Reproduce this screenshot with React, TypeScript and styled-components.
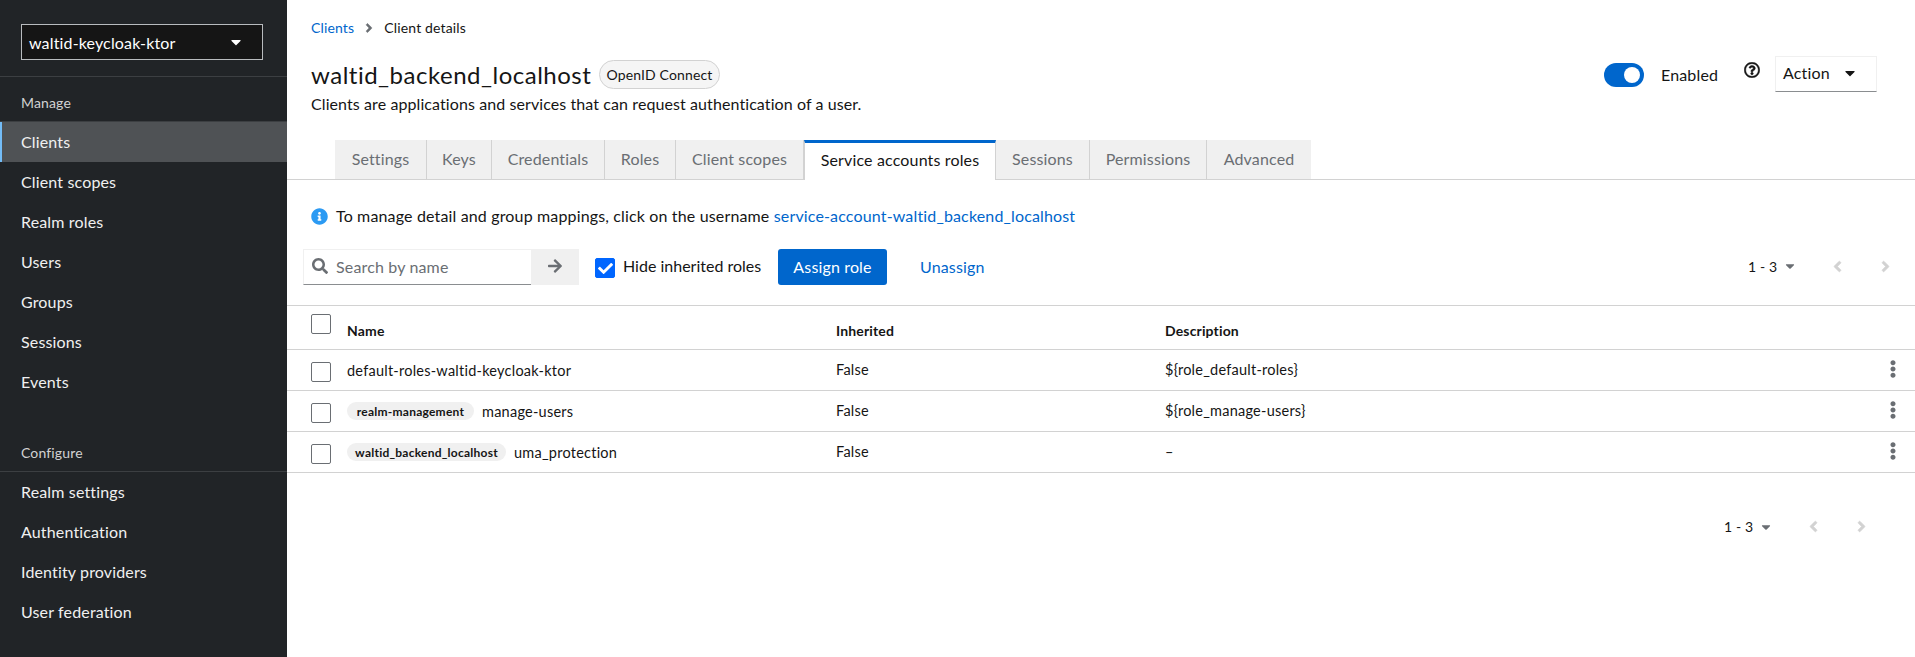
import React from "react";
import styled, { createGlobalStyle } from "styled-components";
import { FaAngleLeft, FaAngleRight, FaArrowRight, FaCaretDown, FaCheck, FaEllipsisV, FaInfoCircle, FaRegQuestionCircle, FaSearch } from "react-icons/fa";

const GlobalStyle = createGlobalStyle`
  html, body {
    margin: 0;
    height: 100%;
    background: #fff;
    color: #151515;
    font-family: "Lato", "Liberation Sans", sans-serif;
    font-size: 16px;
    letter-spacing: 0.15px;
  }
  #root {
    height: 100%;
  }
`;

const Page = styled.div`
  display: flex;
  height: 100vh;
  overflow: hidden;
`;

const Sidebar = styled.aside`
  width: 287px;
  flex-shrink: 0;
  background: #212427;
  color: #fff;
`;

const RealmArea = styled.div`
  padding: 24px 24px 16px 21px;
  border-bottom: 1px solid #3c3f42;
`;

const RealmSelect = styled.div`
  display: flex;
  align-items: center;
  justify-content: space-between;
  height: 36px;
  box-sizing: border-box;
  padding: 0 18px 0 7px;
  background: #151515;
  border: 1px solid #b8bbbe;
  color: #fff;
  svg {
    font-size: 16px;
  }
`;

const SectionTitle = styled.div<{ $top: number }>`
  padding: ${(p) => p.$top}px 21px 8px;
  line-height: 20px;
  font-size: 14px;
  color: #d2d2d2;
  border-bottom: 1px solid #3c3f42;
`;

const NavItem = styled.div<{ $active?: boolean }>`
  height: 40px;
  line-height: 40px;
  padding-left: 21px;
  box-sizing: border-box;
  color: #f0f0f0;
  background: ${(p) => (p.$active ? "#4f5255" : "transparent")};
  box-shadow: ${(p) => (p.$active ? "inset 2px 0 0 #73bcf7" : "none")};
`;

const Main = styled.main`
  flex: 1;
  min-width: 0;
`;

const Breadcrumb = styled.nav`
  display: flex;
  align-items: center;
  padding: 18px 24px 0;
  height: 20px;
  font-size: 14px;
  line-height: 20px;
  svg {
    margin: 0 8px;
    font-size: 14px;
    color: #6a6e73;
    stroke: currentColor;
    stroke-width: 16;
  }
`;

const LinkText = styled.a`
  color: #06c;
`;

const PageHeader = styled.header`
  display: flex;
  justify-content: space-between;
  margin-top: 18px;
  height: 84px;
  padding: 0 38px 0 24px;
`;

const TitleRow = styled.div`
  display: flex;
  align-items: center;
  gap: 8px;
  padding-top: 4px;
  height: 29px;
`;

const Title = styled.h1`
  margin: 0;
  width: 280px;
  font-size: 24px;
  font-weight: 400;
  line-height: 29px;
  letter-spacing: 0.5px;
  white-space: nowrap;
`;

const ProtocolLabel = styled.span`
  display: inline-flex;
  align-items: center;
  justify-content: center;
  box-sizing: border-box;
  width: 121px;
  height: 29px;
  border: 1px solid #d2d2d2;
  border-radius: 30px;
  background: #f5f5f5;
  font-size: 14px;
`;

const Subtitle = styled.p`
  margin: 5px 0 0;
  font-size: 16px;
  line-height: 20px;
  letter-spacing: 0.09px;
`;

const Actions = styled.div`
  display: flex;
  align-items: flex-start;
`;

const Switch = styled.span`
  display: flex;
  align-items: center;
  justify-content: flex-end;
  box-sizing: border-box;
  width: 40px;
  height: 24px;
  margin-top: 7px;
  padding-right: 4px;
  border-radius: 12px;
  background: #06c;
  &::after {
    content: "";
    width: 16px;
    height: 16px;
    border-radius: 50%;
    background: #fff;
  }
`;

const SwitchLabel = styled.span`
  width: 57px;
  margin: 7px 26px 0 17px;
  line-height: 24px;
  white-space: nowrap;
`;

const HelpIcon = styled.span`
  display: flex;
  margin: 6px 15px 0 0;
  font-size: 16px;
  svg {
    stroke: currentColor;
    stroke-width: 14;
  }
`;

const ActionSelect = styled.div`
  display: flex;
  align-items: center;
  justify-content: space-between;
  box-sizing: border-box;
  width: 102px;
  height: 36px;
  padding: 0 18px 3px 7px;
  border: 1px solid #f0f0f0;
  border-bottom-color: #8a8d90;
  svg {
    font-size: 16px;
  }
`;

const TabList = styled.div`
  display: flex;
  height: 40px;
  box-sizing: border-box;
  padding-left: 48px;
  border-bottom: 1px solid #d2d2d2;
`;

const Tab = styled.div<{ $width: number; $active?: boolean }>`
  display: flex;
  align-items: center;
  justify-content: center;
  box-sizing: border-box;
  width: ${(p) => p.$width}px;
  height: ${(p) => (p.$active ? 40 : 39)}px;
  padding-bottom: ${(p) => (p.$active ? 4 : 2)}px;
  white-space: nowrap;
  color: ${(p) => (p.$active ? "#151515" : "#6a6e73")};
  background: ${(p) => (p.$active ? "#fff" : "#f0f0f0")};
  border-right: 1px solid #d2d2d2;
  border-left: ${(p) => (p.$active ? "1px solid #d2d2d2" : "none")};
  border-top: ${(p) => (p.$active ? "3px solid #06c" : "none")};
  &:last-child {
    border-right: none;
  }
`;

const Notice = styled.div`
  display: flex;
  align-items: center;
  gap: 8px;
  margin-top: 24px;
  padding-left: 24px;
  line-height: 24px;
  white-space: pre;
  svg {
    font-size: 17px;
    color: #2b9af3;
  }
`;

const Toolbar = styled.div`
  display: flex;
  align-items: center;
  height: 36px;
  margin: 21px 0 20px;
  padding-left: 16px;
`;

const SearchBox = styled.div`
  display: flex;
  align-items: center;
  gap: 8px;
  box-sizing: border-box;
  width: 228px;
  height: 36px;
  padding: 0 0 2px 8px;
  border: 1px solid #f0f0f0;
  border-bottom-color: #8a8d90;
  border-right: none;
  color: #6a6e73;
  svg {
    font-size: 16px;
  }
`;

const SearchButton = styled.div`
  display: flex;
  align-items: center;
  justify-content: center;
  width: 48px;
  height: 36px;
  padding-bottom: 2px;
  box-sizing: border-box;
  background: #f0f0f0;
  color: #6a6e73;
`;

const Check = styled.span<{ $checked?: boolean }>`
  display: flex;
  align-items: center;
  justify-content: center;
  box-sizing: border-box;
  width: 20px;
  height: 20px;
  flex-shrink: 0;
  border-radius: 2px;
  border: 1px solid ${(p) => (p.$checked ? "#0066ff" : "#6a6e73")};
  background: ${(p) => (p.$checked ? "#0066ff" : "#fff")};
  color: #fff;
  font-size: 15px;
`;

const HideCheck = styled.div`
  display: flex;
  margin: 2px 8px 0 16px;
`;

const HideLabel = styled.span`
  width: 139px;
  margin: -4px 16px 0 0;
  letter-spacing: 0;
  white-space: nowrap;
`;

const AssignButton = styled.div`
  display: flex;
  align-items: center;
  justify-content: center;
  box-sizing: border-box;
  width: 109px;
  height: 36px;
  padding-bottom: 2px;
  border-radius: 3px;
  background: #06c;
  color: #fff;
`;

const UnassignButton = styled.div`
  margin: -2px 0 0 33px;
  color: #06c;
`;

const Pager = styled.div<{ $right: number }>`
  display: flex;
  align-items: center;
  justify-content: flex-end;
  margin-left: auto;
  margin-right: ${(p) => p.$right}px;
  padding-bottom: 2px;
  font-size: 14px;
`;

const PagerCount = styled.span`
  width: 27px;
  white-space: pre;
`;

const PagerCaret = styled.span`
  display: flex;
  margin: 0 16px 0 8px;
  color: #6a6e73;
  font-size: 14px;
`;

const PagerArrow = styled.span`
  display: flex;
  justify-content: center;
  width: 48px;
  color: #d2d2d2;
  font-size: 17px;
  svg {
    stroke: currentColor;
    stroke-width: 16;
  }
`;

const BottomBar = styled.div`
  display: flex;
  margin-top: 45px;
`;

const TableGrid = styled.div`
  border-top: 1px solid #d2d2d2;
`;

const TableRow = styled.div<{ $head?: boolean }>`
  display: grid;
  grid-template-columns: 60px 489px 329px 1fr 44px;
  align-items: ${(p) => (p.$head ? "start" : "center")};
  height: ${(p) => (p.$head ? 44 : 41)}px;
  box-sizing: border-box;
  padding-bottom: ${(p) => (p.$head ? 0 : 1)}px;
  border-bottom: 1px solid #d2d2d2;
  font-size: 14.5px;
  letter-spacing: 0.24px;
`;

const CheckCell = styled.div<{ $head?: boolean }>`
  padding: ${(p) => (p.$head ? "8px 0 0 24px" : "5px 0 0 24px")};
`;

const HeadCell = styled.div`
  padding-top: 15px;
  line-height: 20px;
  font-size: 14px;
  font-weight: 700;
  letter-spacing: 0.15px;
`;

const NameCell = styled.div`
  display: flex;
  align-items: center;
  gap: 8px;
  margin-top: 1px;
`;

const ClientLabel = styled.span<{ $width: number }>`
  display: inline-flex;
  align-items: center;
  justify-content: center;
  width: ${(p) => p.$width}px;
  height: 18px;
  border-radius: 30px;
  background: #f0f0f0;
  font-size: 12px;
  font-weight: 700;
`;

const KebabCell = styled.div`
  display: flex;
  justify-content: center;
  margin-top: -2px;
  color: #6a6e73;
  font-size: 18px;
`;

const manageItems = ["Clients", "Client scopes", "Realm roles", "Users", "Groups", "Sessions", "Events"];
const configureItems = ["Realm settings", "Authentication", "Identity providers", "User federation"];

const tabs = [
  { name: "Settings", width: 92 },
  { name: "Keys", width: 65 },
  { name: "Credentials", width: 113 },
  { name: "Roles", width: 71 },
  { name: "Client scopes", width: 128 },
  { name: "Service accounts roles", width: 192, active: true },
  { name: "Sessions", width: 94 },
  { name: "Permissions", width: 117 },
  { name: "Advanced", width: 104 },
];

const roles = [
  { client: "", clientWidth: 0, name: "default-roles-waltid-keycloak-ktor", inherited: "False", description: "${role_default-roles}" },
  { client: "realm-management", clientWidth: 127, name: "manage-users", inherited: "False", description: "${role_manage-users}" },
  { client: "waltid_backend_localhost", clientWidth: 159, name: "uma_protection", inherited: "False", description: "–" },
];

const PagerBlock = ({ right }: { right: number }) => (
  <Pager $right={right}>
    <PagerCount>1 - 3</PagerCount>
    <PagerCaret><FaCaretDown /></PagerCaret>
    <PagerArrow><FaAngleLeft /></PagerArrow>
    <PagerArrow><FaAngleRight /></PagerArrow>
  </Pager>
);

export default function App() {
  return (
    <Page>
      <GlobalStyle />
      <Sidebar>
        <RealmArea>
          <RealmSelect>
            waltid-keycloak-ktor
            <FaCaretDown />
          </RealmSelect>
        </RealmArea>
        <SectionTitle $top={16}>Manage</SectionTitle>
        {manageItems.map((item) => (
          <NavItem key={item} $active={item === "Clients"}>{item}</NavItem>
        ))}
        <SectionTitle $top={41}>Configure</SectionTitle>
        {configureItems.map((item) => (
          <NavItem key={item}>{item}</NavItem>
        ))}
      </Sidebar>
      <Main>
        <Breadcrumb>
          <LinkText>Clients</LinkText>
          <FaAngleRight />
          Client details
        </Breadcrumb>
        <PageHeader>
          <div>
            <TitleRow>
              <Title>waltid_backend_localhost</Title>
              <ProtocolLabel>OpenID Connect</ProtocolLabel>
            </TitleRow>
            <Subtitle>Clients are applications and services that can request authentication of a user.</Subtitle>
          </div>
          <Actions>
            <Switch />
            <SwitchLabel>Enabled</SwitchLabel>
            <HelpIcon><FaRegQuestionCircle /></HelpIcon>
            <ActionSelect>
              Action
              <FaCaretDown />
            </ActionSelect>
          </Actions>
        </PageHeader>
        <TabList>
          {tabs.map((tab) => (
            <Tab key={tab.name} $width={tab.width} $active={tab.active}>{tab.name}</Tab>
          ))}
        </TabList>
        <Notice>
          <FaInfoCircle />
          <span>
            To manage detail and group mappings, click on the username{" "}
            <LinkText>service-account-waltid_backend_localhost</LinkText>
          </span>
        </Notice>
        <Toolbar>
          <SearchBox>
            <FaSearch />
            Search by name
          </SearchBox>
          <SearchButton><FaArrowRight /></SearchButton>
          <HideCheck>
            <Check $checked><FaCheck /></Check>
          </HideCheck>
          <HideLabel>Hide inherited roles</HideLabel>
          <AssignButton>Assign role</AssignButton>
          <UnassignButton>Unassign</UnassignButton>
          <PagerBlock right={6} />
        </Toolbar>
        <TableGrid>
          <TableRow $head>
            <CheckCell $head><Check /></CheckCell>
            <HeadCell>Name</HeadCell>
            <HeadCell>Inherited</HeadCell>
            <HeadCell>Description</HeadCell>
            <div />
          </TableRow>
          {roles.map((role) => (
            <TableRow key={role.name}>
              <CheckCell><Check /></CheckCell>
              <NameCell>
                {role.client && <ClientLabel $width={role.clientWidth}>{role.client}</ClientLabel>}
                {role.name}
              </NameCell>
              <div>{role.inherited}</div>
              <div>{role.description}</div>
              <KebabCell><FaEllipsisV /></KebabCell>
            </TableRow>
          ))}
        </TableGrid>
        <BottomBar>
          <PagerBlock right={30} />
        </BottomBar>
      </Main>
    </Page>
  );
}
